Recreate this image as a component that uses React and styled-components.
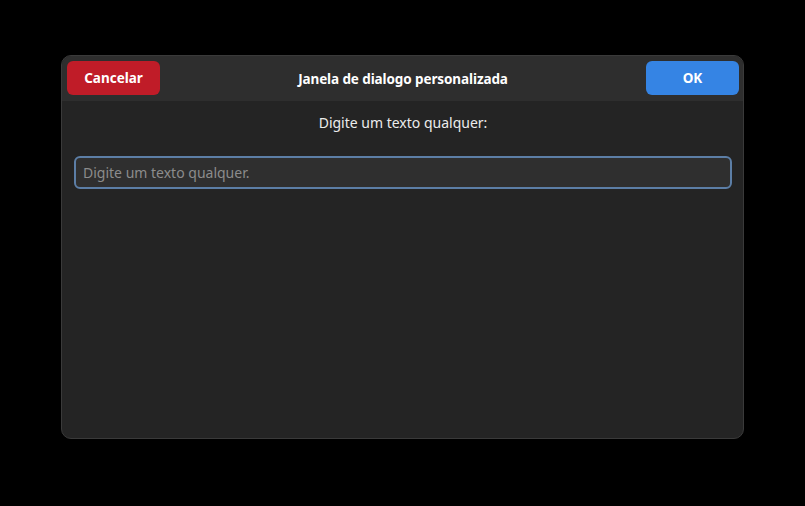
import styled, { createGlobalStyle } from "styled-components";

const GlobalStyle = createGlobalStyle`
  html, body {
    margin: 0;
    padding: 0;
    background: #000000;
  }
  body {
    font-family: "Noto Sans", "Open Sans", sans-serif;
  }
`;

const Screen = styled.div`
  width: 805px;
  height: 506px;
  display: flex;
  justify-content: center;
  align-items: flex-start;
  padding-top: 55px;
  box-sizing: border-box;
`;

const Dialog = styled.div`
  width: 683px;
  height: 384px;
  box-sizing: border-box;
  background: #242424;
  border: 1px solid #3a3a3a;
  border-radius: 10px;
  overflow: hidden;
  display: flex;
  flex-direction: column;
`;

const HeaderBar = styled.div`
  height: 45px;
  flex: none;
  box-sizing: border-box;
  padding: 5px 4px 5px 5px;
  background: #2e2e2e;
  display: flex;
  align-items: flex-start;
  justify-content: space-between;
`;

const Title = styled.h1`
  margin: 0;
  align-self: center;
  font-size: 13.5px;
  font-weight: 700;
  color: #ffffff;
  letter-spacing: -0.1px;
`;

const HeaderButton = styled.button`
  width: 93px;
  height: 34px;
  border: none;
  border-radius: 6px;
  font-family: inherit;
  font-size: 13.5px;
  font-weight: 700;
  color: #ffffff;
  background: ${({ $variant }) => ($variant === "danger" ? "#c01c28" : "#3584e4")};
  cursor: pointer;
`;

const Content = styled.div`
  flex: 1;
  display: flex;
  flex-direction: column;
  align-items: stretch;
  padding: 12px 11px 0 12px;
`;

const Label = styled.p`
  margin: 0;
  text-align: center;
  font-size: 14px;
  line-height: 20px;
  color: #ececec;
`;

const TextField = styled.input`
  margin-top: 23px;
  height: 33px;
  box-sizing: border-box;
  padding: 0 7px;
  background: #2f2f2f;
  border: 2px solid #5c7ea6;
  border-radius: 6px;
  font-family: inherit;
  font-size: 14px;
  color: #ffffff;
  caret-color: #ffffff;
  outline: none;
  &::placeholder {
    color: #8c8c8c;
  }
`;

export default function App() {
  return (
    <>
      <GlobalStyle />
      <Screen>
        <Dialog>
          <HeaderBar>
            <HeaderButton $variant="danger">Cancelar</HeaderButton>
            <Title>Janela de dialogo personalizada</Title>
            <HeaderButton $variant="suggested">OK</HeaderButton>
          </HeaderBar>
          <Content>
            <Label>Digite um texto qualquer:</Label>
            <TextField placeholder="Digite um texto qualquer." autoFocus />
          </Content>
        </Dialog>
      </Screen>
    </>
  );
}
